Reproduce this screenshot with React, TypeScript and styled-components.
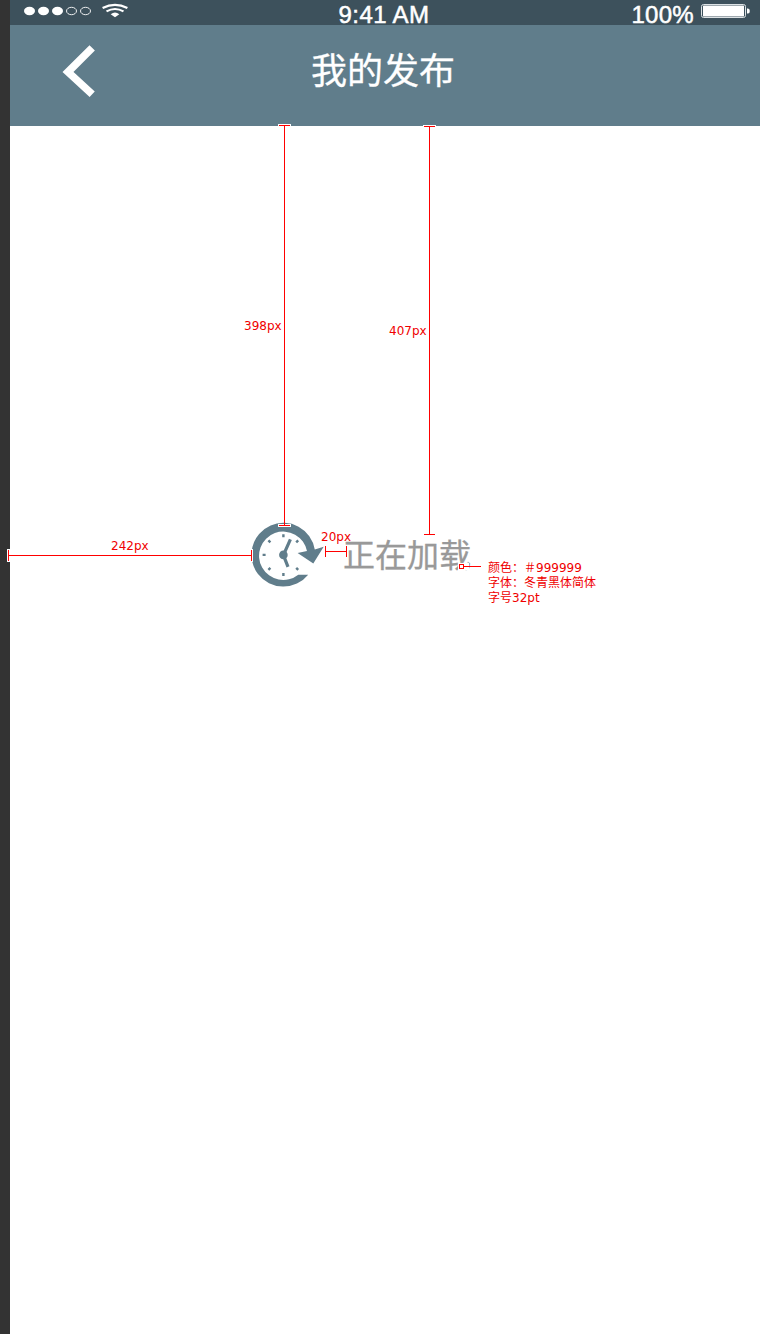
import React from 'react';
import styled, { createGlobalStyle } from 'styled-components';

const GlobalStyle = createGlobalStyle`
  *, *::before, *::after { box-sizing: border-box; }
  html, body { margin: 0; padding: 0; background: #fff; }
`;

const cjk = '"Noto Sans CJK SC", sans-serif';

const Page = styled.div`
  position: relative;
  display: flex;
  width: 760px;
  height: 1334px;
  overflow: hidden;
  background: #fff;
`;

const Gutter = styled.div`
  flex: 0 0 10px;
  background: #333;
`;

const Screen = styled.main`
  flex: 1;
  display: flex;
  flex-direction: column;
`;

const StatusBar = styled.div`
  display: grid;
  grid-template-columns: 1fr auto 1fr;
  height: 25px;
  padding: 0 10px 0 14px;
  background: #3d515c;
  color: #fff;
  font-family: "Liberation Sans", Arial, sans-serif;
  font-size: 24px;
  line-height: 29px;
`;

const Signal = styled.div`
  display: flex;
  height: 22px;
  gap: 10px;
`;

const StatusText = styled.span<{ $spacing: number }>`
  height: 25px;
  white-space: nowrap;
  letter-spacing: ${(p) => p.$spacing}px;
  -webkit-text-stroke: 0.5px #fff;
`;

const Clock = styled(StatusText)`
  padding-right: 6px;
`;

const Power = styled.div`
  display: flex;
  justify-content: flex-end;
  gap: 7px;
  height: 25px;
`;

const NavBar = styled.header`
  display: grid;
  grid-template-columns: 1fr auto 1fr;
  height: 101px;
  background: #607d8b;
`;

const BackButton = styled.button`
  justify-self: start;
  align-self: start;
  margin: 20px 0 0 52px;
  padding: 0;
  border: 0;
  background: none;
  line-height: 0;
`;

const Title = styled.h1`
  margin: 0;
  padding-right: 4px;
  color: #fff;
  font: 400 36px/86px ${cjk};
  -webkit-text-stroke: 0.3px #fff;
`;

const Loading = styled.section`
  display: flex;
  align-items: flex-start;
  gap: 18px;
  margin: 396px 0 0 241px;
`;

const LoadingText = styled.span`
  color: #999;
  font: 400 32px/48px ${cjk};
  margin-top: 7px;
  -webkit-text-stroke: 0.3px #999;
`;

const Redlines = styled.svg`
  position: absolute;
  inset: 0;
  pointer-events: none;
`;

const Label = styled.span<{ $x: number; $y: number }>`
  position: absolute;
  left: ${(p) => p.$x}px;
  top: ${(p) => p.$y}px;
  color: #f00000;
  font: 12px/15px "DejaVu Sans", ${cjk};
  white-space: pre;
`;

type Measure = { x1: number; y1: number; x2: number; y2: number };

const measures: Measure[] = [
  { x1: 284.5, y1: 125.5, x2: 284.5, y2: 525.5 },
  { x1: 429.5, y1: 126.5, x2: 429.5, y2: 534.5 },
  { x1: 8.5, y1: 555.5, x2: 251.5, y2: 555.5 },
  { x1: 325.5, y1: 551.5, x2: 346.5, y2: 551.5 },
];

const measurePath = ({ x1, y1, x2, y2 }: Measure) =>
  x1 === x2
    ? `M${x1} ${y1}V${y2}M${x1 - 5.5} ${y1}h11M${x1 - 5.5} ${y2}h11`
    : `M${x1} ${y1}H${x2}M${x1} ${y1 - 5.5}v11M${x2} ${y1 - 5.5}v11`;

const capPath = ({ x1, y1, x2, y2 }: Measure) =>
  x1 === x2
    ? `M${x1 - 6.5} ${y1}h13M${x1 - 6.5} ${y2}h13`
    : `M${x1} ${y1 - 6.5}v13M${x2} ${y1 - 6.5}v13`;

const ClockIcon = () => (
  <svg width="74" height="66" viewBox="251 521.5 74 66">
    <path
      fill="#607d8b"
      d="M308.2 574.2A31.9 31.9 0 1 1 314.8 548.9L323.7 546.3L313.3 563L297.6 552.6L307 550.6A24.2 24.2 0 1 0 298.3 574.2Z"
    />
    <g stroke="#607d8b" strokeWidth="2.4">
      <path d="M283.4 533.8v3M283.4 572.4v3M262.6 554.4h3M268.4 539.8l2 2M298.2 539.8l-2 2M268.4 569.3l2-2M298.2 569.3l-2-2" />
      <path strokeWidth="3.2" d="M283.4 554.6L290.4 538.8M283.4 554.6L288 566.3" />
    </g>
    <circle cx="283.4" cy="554.4" r="4.3" fill="#607d8b" />
  </svg>
);

export default function App() {
  return (
    <Page>
      <GlobalStyle />
      <Gutter />
      <Screen>
        <StatusBar>
          <Signal>
            <svg width="68" height="22" viewBox="24 0 68 22" fill="#fff">
              <ellipse cx="29.5" cy="11" rx="5.5" ry="4.2" />
              <ellipse cx="43.5" cy="11" rx="5.5" ry="4.2" />
              <ellipse cx="57.5" cy="11" rx="5.5" ry="4.2" />
              <g fill="none" stroke="#fff" strokeWidth="0.9">
                <ellipse cx="71.5" cy="11" rx="5" ry="3.7" />
                <ellipse cx="85.5" cy="11" rx="5" ry="3.7" />
              </g>
            </svg>
            <svg width="26" height="22" viewBox="102 0 26 22">
              <g fill="none" stroke="#fff" strokeWidth="2.2">
                <path d="M102.6 8Q115 1.8 127.4 8" />
                <path d="M106.5 11.4Q115 6.6 123.5 11.4" />
              </g>
              <path fill="#fff" d="M110.7 14.2Q115 11 119.3 14.2L115 17.2Z" />
            </svg>
          </Signal>
          <Clock $spacing={0.4}>9:41 AM</Clock>
          <Power>
            <StatusText $spacing={0.3}>100%</StatusText>
            <svg width="49" height="22" viewBox="701 0 49 22">
              <rect x="701.5" y="4.5" width="44" height="13" rx="2" fill="none" stroke="#dce2e5" />
              <rect x="703" y="5.5" width="41" height="11" rx="0.5" fill="#fff" />
              <path fill="#fff" d="M747 8.5h1q1.8 0 1.8 2.5t-1.8 2.5h-1z" />
            </svg>
          </Power>
        </StatusBar>
        <NavBar>
          <BackButton aria-label="返回">
            <svg width="34" height="53" viewBox="62 45 34 53" fill="none">
              <path d="M92.2 47.9L68 72L92.2 94.2" stroke="#fff" strokeWidth="7.6" />
            </svg>
          </BackButton>
          <Title>我的发布</Title>
        </NavBar>
        <Loading>
          <ClockIcon />
          <LoadingText>正在加载</LoadingText>
        </Loading>
      </Screen>
      <Redlines width="760" height="1334" fill="none" shapeRendering="crispEdges">
        {measures.map((m) => (
          <g key={`${m.x1}-${m.y1}`}>
            <path d={capPath(m)} stroke="#fff" strokeWidth="3" />
            <path d={measurePath(m)} stroke="#f00" />
          </g>
        ))}
        <path d="M458 566.5h11" stroke="#fff" strokeWidth="7" />
        <path d="M459.5 564.5h4v4h-4zM464 566.5h17" stroke="#f00" />
      </Redlines>
      <Label $x={244} $y={319}>398px</Label>
      <Label $x={389} $y={324}>407px</Label>
      <Label $x={111} $y={539}>242px</Label>
      <Label $x={321} $y={530}>20px</Label>
      <Label $x={488} $y={561}>{'颜色：＃999999\n字体：冬青黑体简体\n字号32pt'}</Label>
    </Page>
  );
}
